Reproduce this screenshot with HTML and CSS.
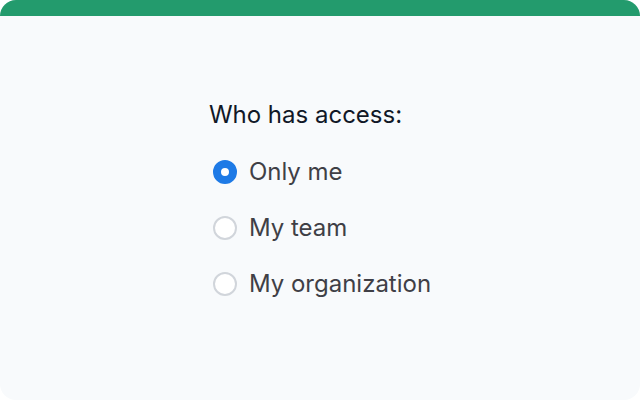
FILE: index.html
```html
<!DOCTYPE html>
<html lang="en">
<head>
<meta charset="utf-8">
<link rel="stylesheet" href="styles.css">
</head>
<body>
<div class="card">
  <div class="bar"></div>
  <div class="content">
    <div class="group">
      <div class="title">Who has access:</div>
      <div class="options">
        <label class="option"><span class="radio checked"></span><span class="label">Only me</span></label>
        <label class="option"><span class="radio"></span><span class="label">My team</span></label>
        <label class="option"><span class="radio"></span><span class="label">My organization</span></label>
      </div>
    </div>
  </div>
</div>
</body>
</html>
```
FILE: styles.css
```css
html, body {
  margin: 0;
  padding: 0;
  background: #ffffff;
}
body {
  font-family: Inter, "Noto Sans", sans-serif;
}
.card {
  width: 640px;
  height: 400px;
  border-radius: 16px;
  overflow: hidden;
  background: #f8fafc;
  display: flex;
  flex-direction: column;
}
.bar {
  height: 16px;
  background: #239b6d;
  flex: none;
}
.content {
  display: flex;
  justify-content: center;
  padding-top: 84px;
}
.group {
  display: flex;
  flex-direction: column;
}
.title {
  font-size: 24px;
  line-height: 30px;
  font-weight: 400;
  color: #111827;
  margin-bottom: 14px;
}
.options {
  display: flex;
  flex-direction: column;
}
.option {
  display: flex;
  align-items: center;
  height: 56px;
  gap: 12px;
  padding-left: 4px;
}
.radio {
  box-sizing: border-box;
  width: 24px;
  height: 24px;
  border-radius: 50%;
  border: 2px solid #d1d5db;
  background: #ffffff;
  flex: none;
}
.radio.checked {
  border: 8px solid #1e7ae6;
  background: #ffffff;
}
.label {
  font-size: 24px;
  line-height: 30px;
  color: #3f3f46;
}
```
